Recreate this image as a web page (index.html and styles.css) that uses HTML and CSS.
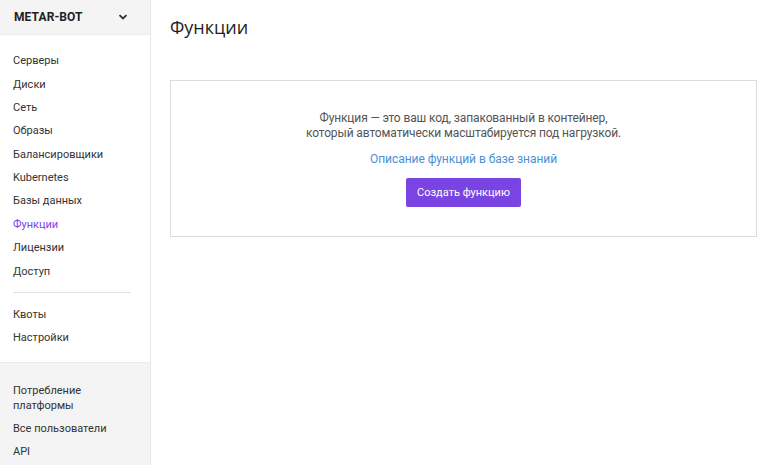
FILE: index.html
```html
<!DOCTYPE html>
<html lang="ru">
<head>
<meta charset="utf-8">
<title>Функции</title>
<link rel="stylesheet" href="styles.css">
</head>
<body>
<div class="app">
  <aside class="sidebar">
    <div class="project">
      <span class="project-name">METAR-BOT</span>
      <svg class="chev" width="10" height="6" viewBox="0 0 10 6"><path d="M1.5 1.2 L5 4.5 L8.5 1.2" fill="none" stroke="#333" stroke-width="1.8"/></svg>
    </div>
    <nav class="nav">
      <a class="item">Серверы</a>
      <a class="item">Диски</a>
      <a class="item">Сеть</a>
      <a class="item">Образы</a>
      <a class="item">Балансировщики</a>
      <a class="item">Kubernetes</a>
      <a class="item">Базы данных</a>
      <a class="item active">Функции</a>
      <a class="item">Лицензии</a>
      <a class="item">Доступ</a>
      <div class="divider"></div>
      <a class="item">Квоты</a>
      <a class="item">Настройки</a>
    </nav>
    <nav class="nav-bottom">
      <a class="item">Потребление<br>платформы</a>
      <a class="item">Все пользователи</a>
      <a class="item">API</a>
    </nav>
  </aside>
  <main class="main">
    <h1 class="title">Функции</h1>
    <section class="card">
      <p class="desc">Функция — это ваш код, запакованный в контейнер,<br>который автоматически масштабируется под нагрузкой.</p>
      <a class="link">Описание функций в базе знаний</a>
      <button class="btn">Создать функцию</button>
    </section>
  </main>
</div>
</body>
</html>
```

FILE: styles.css
```css
* { box-sizing: border-box; }
html, body { margin: 0; padding: 0; }
body {
  font-family: Roboto, "Liberation Sans", sans-serif;
  color: #333;
  background: #fff;
}
.app {
  display: flex;
  height: 465px;
  overflow: hidden;
}
.sidebar {
  width: 151px;
  flex: 0 0 151px;
  border-right: 1px solid #e6e6e6;
  display: flex;
  flex-direction: column;
}
.project {
  height: 35px;
  background: #f4f4f4;
  border-bottom: 1px solid #ececec;
  display: flex;
  align-items: center;
  justify-content: space-between;
  padding: 0 22px 0 14px;
}
.project-name {
  font-weight: 700;
  font-size: 12px;
  color: #222;
  letter-spacing: 0.1px;
}
.chev { display: block; }
.nav {
  padding: 14px 0 12px 0;
  border-bottom: 1px solid #ececec;
}
.item {
  display: block;
  padding: 4.2px 13px;
  font-size: 11px;
  line-height: 15px;
  color: #333;
}
.item.active { color: #7b46e6; }
.divider {
  height: 1px;
  background: #e2e2e2;
  margin: 9px 19px 10px 13px;
}
.nav-bottom {
  flex: 1;
  background: #f4f4f4;
  padding-top: 16px;
}
.main {
  flex: 1;
  padding: 0 11px 0 19px;
}
.title {
  margin: 14px 0 0 0;
  font-family: "Open Sans", "Noto Sans", sans-serif;
  font-weight: 400;
  font-size: 18px;
  line-height: 26px;
  color: #1e1e1e;
}
.card {
  margin-top: 40px;
  border: 1px solid #dcdcdc;
  padding: 30px 20px 29px;
  display: flex;
  flex-direction: column;
  align-items: center;
  text-align: center;
}
.desc {
  margin: 0;
  font-size: 12px;
  line-height: 15px;
  color: #555;
  letter-spacing: -0.12px;
}
.link {
  margin-top: 11px;
  font-size: 12px;
  line-height: 15px;
  color: #4a90d6;
  letter-spacing: -0.05px;
}
.btn {
  margin-top: 11px;
  height: 29px;
  width: 115px;
  border: none;
  border-radius: 2px;
  background: #7a44e4;
  color: #fff;
  font-family: Roboto, "Liberation Sans", sans-serif;
  font-size: 11px;
  padding: 0;
}
```
